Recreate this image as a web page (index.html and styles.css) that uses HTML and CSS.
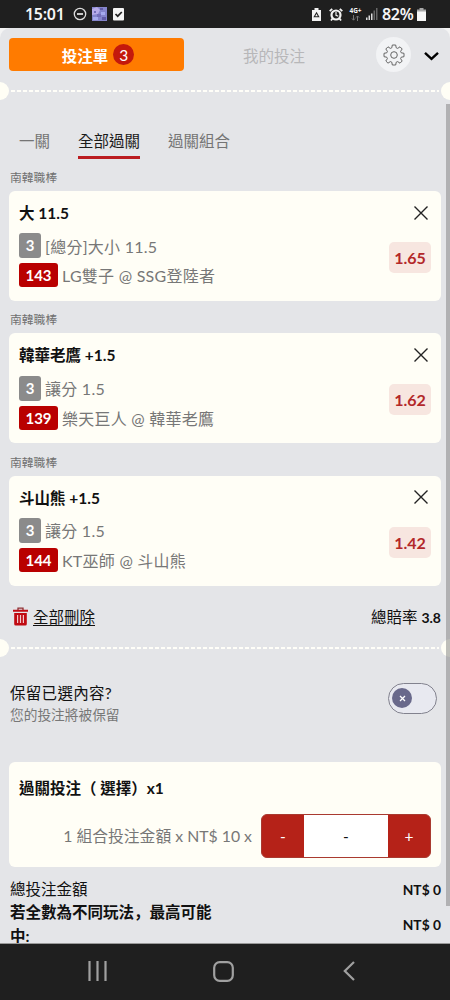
FILE: index.html
```html
<!DOCTYPE html>
<html lang="zh-Hant">
<head>
<meta charset="utf-8">
<title>投注單</title>
<link rel="stylesheet" href="styles.css">
</head>
<body>
<div class="phone">
  <header class="status">
    <span class="clock">15:01</span>
    <svg class="dnd" width="14" height="14" viewBox="0 0 14 14" fill="none" stroke="#ddd" stroke-width="1.3"><circle cx="7" cy="7" r="5.7"/><path d="M4 7h6" stroke-width="1.8"/></svg>
    <svg class="thumb" width="15" height="14" viewBox="0 0 15 14"><path fill="#8585cc" d="M0 0h15v14H0z"/><path fill="#b6abe9" d="M0 2l5-2 3 3-2 4-6 1z"/><path fill="#625ca8" d="M8 1h3v2H8zM10 10h4v3h-4z"/><path fill="#746ebb" d="M5 7h4v3H5zM2 4h2v2H2z"/><path fill="#a6aaee" d="M9 5h4v3H9zM1 10h5v3H1z"/></svg>
    <svg class="check" width="11" height="13" viewBox="0 0 11 13"><rect width="11" height="12.5" rx="1" fill="#f4f4f4"/><path d="M2.5 6l2.2 2.2L8.8 4" fill="none" stroke="#222" stroke-width="1.7"/></svg>
    <span class="grow"></span>
    <svg class="saver" width="9" height="13" viewBox="0 0 9 13"><path fill="#f2f2f2" d="M0 2h2.5V0h4v2H9v11H0z"/><path d="M4.5 4.8l2.2 4H2.3z" fill="none" stroke="#222" stroke-width="1.1"/></svg>
    <svg class="alarm" width="14" height="13" viewBox="0 0 14 13" fill="none" stroke="#f2f2f2"><circle cx="7" cy="7" r="4.5" stroke-width="2.2"/><path d="M.7 3.2L3.2.9M13.3 3.2L10.8.9M3.5 10.5l-1.5 2M10.5 10.5l1.5 2" stroke-width="1.8"/><path d="M7 4v3.3l2.3 1" stroke-width="1.2"/></svg>
    <span class="net"><b>4G+</b><svg width="9" height="6" viewBox="0 0 9 6" fill="none" stroke="#777"><path d="M2.5 0v5M1 3.5l1.5 1.7L4 3.5M6.5 6V1M5 2.5L6.5 1 8 2.5"/></svg></span>
    <svg class="signal" width="12" height="12" viewBox="0 0 12 12"><path fill="#ddd" d="M0 9.5h1.5V12H0zM2.5 7.5H4V12H2.5zM5 5.5h1.5V12H5z"/><path fill="#666" d="M7.5 2.5H9V12H7.5zM10 0h1.5v12H10z"/></svg>
    <span class="percent">82%</span>
    <svg class="battery" width="9" height="13" viewBox="0 0 9 13"><path fill="#a8a8a8" d="M2.5 0h4v1.5H9V4H0V1.5h2.5z"/><path fill="#f7f7f7" d="M0 3.5h9V13H0z"/></svg>
  </header>

  <main class="sheet-wrap">
    <div class="sheet">
      <nav class="top">
        <button class="slip">投注單<span class="count">3</span></button>
        <span class="mine">我的投注</span>
        <span class="gear"><svg width="22" height="22" viewBox="0 0 22 22" fill="none" stroke="#666" stroke-width="1"><path d="M9.3 1h3.4l.5 2.8 1.5.6 2.3-1.6 2.2 2.2-1.6 2.3.6 1.5 2.8.5v3.4l-2.8.5-.6 1.5 1.6 2.3-2.2 2.2-2.3-1.600-1.500.6-.5 2.800H9.300l-.5-2.800-1.500-.6L5 19.200 2.800 17l1.600-2.300-.6-1.500L1 12.700V9.300l2.800-.5.6-1.500L2.800 5 5 2.800l2.300 1.600 1.500-.6z" stroke-linejoin="round"/><circle cx="11" cy="11" r="3.3"/></svg></span>
        <svg class="chev" width="15" height="10" viewBox="0 0 15 10" fill="none" stroke="#000" stroke-width="2.4"><path d="M1 1.8l6.5 6 6.5-6"/></svg>
      </nav>
      <div class="perforation"></div>

      <nav class="tabs">
        <span class="tab">一關</span>
        <span class="tab active">全部過關</span>
        <span class="tab">過關組合</span>
      </nav>

      <section class="bet">
        <h3 class="league">南韓職棒</h3>
        <div class="card">
          <div class="info">
            <div class="pick">大 11.5</div>
            <div class="line"><span class="tag gray">3</span><span class="txt">[總分]大小 11.5</span></div>
            <div class="line"><span class="tag red">143</span><span class="txt">LG雙子 @ SSG登陸者</span></div>
          </div>
          <div class="side">
            <svg class="close" width="16" height="16" viewBox="0 0 16 16"><path d="M1.5 1.5l13 13M14.5 1.5l-13 13" stroke="#222" stroke-width="1.4"/></svg>
            <span class="odds">1.65</span>
          </div>
        </div>
      </section>
      <section class="bet">
        <h3 class="league">南韓職棒</h3>
        <div class="card">
          <div class="info">
            <div class="pick">韓華老鷹 +1.5</div>
            <div class="line"><span class="tag gray">3</span><span class="txt">讓分 1.5</span></div>
            <div class="line"><span class="tag red">139</span><span class="txt">樂天巨人 @ 韓華老鷹</span></div>
          </div>
          <div class="side">
            <svg class="close" width="16" height="16" viewBox="0 0 16 16"><path d="M1.5 1.5l13 13M14.5 1.5l-13 13" stroke="#222" stroke-width="1.4"/></svg>
            <span class="odds">1.62</span>
          </div>
        </div>
      </section>
      <section class="bet">
        <h3 class="league">南韓職棒</h3>
        <div class="card">
          <div class="info">
            <div class="pick">斗山熊 +1.5</div>
            <div class="line"><span class="tag gray">3</span><span class="txt">讓分 1.5</span></div>
            <div class="line"><span class="tag red">144</span><span class="txt">KT巫師 @ 斗山熊</span></div>
          </div>
          <div class="side">
            <svg class="close" width="16" height="16" viewBox="0 0 16 16"><path d="M1.5 1.5l13 13M14.5 1.5l-13 13" stroke="#222" stroke-width="1.4"/></svg>
            <span class="odds">1.42</span>
          </div>
        </div>
      </section>

      <div class="summary">
        <svg class="trash" width="15" height="19" viewBox="0 0 15 19"><path d="M5 3V1.2h5V3" fill="none" stroke="#8f3033" stroke-width="1.3"/><path fill="#c00a12" d="M0 2.800h15v2H0zM1.200 6h12.600v11a1.500 1.500 0 0 1-1.500 1.500H2.700A1.500 1.500 0 0 1 1.200 17z"/><path d="M4.600 8v8M7.500 8v8M10.400 8v8" stroke="#f1c9cb" stroke-width="1.2"/></svg>
        <a class="remove">全部刪除</a>
        <span class="total-odds">總賠率 <b>3.8</b></span>
      </div>
      <div class="perforation"></div>

      <div class="keep">
        <div>
          <div class="keep-title">保留已選內容?</div>
          <div class="keep-note">您的投注將被保留</div>
        </div>
        <span class="toggle"><span class="knob"><svg width="7" height="7" viewBox="0 0 7 7"><path d="M1 1l5 5M6 1L1 6" stroke="#fff" stroke-width="1.3"/></svg></span></span>
      </div>

      <section class="stake">
        <div class="stake-title">過關投注（ 選擇）x1</div>
        <div class="stake-row">
          <span class="stake-label">1 組合投注金額 x NT$ 10 x</span>
          <div class="stepper"><span class="step">-</span><span class="value">-</span><span class="step">+</span></div>
        </div>
      </section>

      <div class="totals">
        <div class="total"><span class="total-label">總投注金額</span><b class="amount">NT$ 0</b></div>
        <div class="total"><b class="payout" lang="zh-Hans">若全數為不同玩法，最高可能中:</b><b class="amount">NT$ 0</b></div>
      </div>
    </div>
    <div class="scrollbar"></div>
  </main>

  <footer class="navbar">
    <svg width="20" height="20" viewBox="0 0 20 20" stroke="#a0a0a0" stroke-width="2.2"><path d="M2.5 0v20M10.5 0v20M18.500 0v20"/></svg>
    <svg class="home" width="21" height="21" viewBox="0 0 21 21" fill="none" stroke="#a0a0a0" stroke-width="2.2"><rect x="1.2" y="1.2" width="18.6" height="18.6" rx="5.5"/></svg>
    <svg width="12" height="20" viewBox="0 0 12 20" fill="none" stroke="#a0a0a0" stroke-width="2.2"><path d="M11 1L1.800 10 11 19"/></svg>
  </footer>
</div>
</body>
</html>
```
FILE: styles.css
```css
* { box-sizing: border-box; }
body {
  margin: 0;
  font-family: Lato, "Noto Sans CJK TC", sans-serif;
  font-size: 15.5px;
  color: #111;
}
.phone { width: 450px; height: 1000px; display: flex; flex-direction: column; overflow: hidden; background: #1f1f1f; }

.status { height: 28px; flex: none; display: flex; align-items: center; padding: 0 24px 0 25px; background: #1f1f1f; color: #f5f5f5; font: 600 16px "Noto Sans", sans-serif; }
.grow { flex: 1; }
.clock { width: 48px; letter-spacing: -0.3px; }
.thumb { margin-left: 5px; }
.check { margin-left: 6px; }
.alarm { margin-left: 8px; }
.net { width: 13px; margin-left: 6px; display: flex; flex-direction: column; align-items: center; }
.net b { font: 700 6.5px/8px "Noto Sans", sans-serif; }
.signal { margin-left: 4px; }
.percent { margin-left: 4px; width: 35px; letter-spacing: -0.3px; }

.sheet-wrap { position: relative; height: 916px; flex: none; background: #f4f4f4; overflow: hidden; border-bottom: 1px solid #999; }
.sheet { height: 916px; background: #e4e5e8; border-radius: 10px 10px 0 0; }
.scrollbar { position: absolute; right: 0; top: 76px; width: 4px; height: 802px; background: rgba(125, 125, 125, 0.5); }

.top { height: 59.5px; padding: 10px 11px 0 9px; display: flex; align-items: flex-start; }
.slip { width: 175px; height: 33px; border: 0; border-radius: 4px; padding: 0 0 0 3px; background: #ff7b00; color: #fff; font: 700 15.5px Lato, "Noto Sans CJK TC", sans-serif; display: flex; align-items: center; justify-content: center; gap: 5px; }
.count { width: 21px; height: 21px; border-radius: 50%; background: #c4190c; font-weight: 400; display: flex; align-items: center; justify-content: center; }
.mine { width: 180px; height: 33px; line-height: 36px; text-align: center; color: #b7b7b9; }
.gear { width: 35px; height: 35px; margin: -1px 0 0 12px; border-radius: 50%; background: #f2f3f5; display: flex; align-items: center; justify-content: center; }
.chev { margin: 13px 0 0 13px; }

.perforation { height: 18px; display: flex; align-items: center; justify-content: space-between; margin: -6px -9px 0 -9px; background: repeating-linear-gradient(90deg, #fffef8 0 4px, transparent 4px 6px) 20px 8px / calc(100% - 40px) 2px no-repeat; }
.perforation::before, .perforation::after { content: ""; width: 18px; height: 18px; border-radius: 50%; background: #fffef5; }

.tabs { height: 61.5px; padding: 28.5px 0 0 19px; display: flex; align-items: flex-start; gap: 28px; color: #757575; }
.tab { height: 31px; line-height: 26px; }
.tab.active { color: #1a1a1a; border-bottom: 3px solid #bb1c20; }

.bet { height: 142.3px; padding: 0 9px; }
.league { height: 30px; margin: 0; padding-left: 1px; font-size: 11.8px; font-weight: 400; line-height: 33px; color: #707070; }
.card { height: 110px; border-radius: 6px; background: #fffef6; display: flex; justify-content: space-between; padding: 10px 10px 0 10px; }
.pick { height: 30px; line-height: 25px; font-weight: 700; color: #111; }
.line { height: 29.5px; display: flex; align-items: center; gap: 4px; color: #777; }
.tag { height: 25px; border-radius: 3px; color: #fff; font-size: 15px; font-weight: 700; line-height: 25px; text-align: center; }
.tag.gray { width: 22px; background: #8b8b8b; }
.tag.red { width: 39px; height: 24px; line-height: 24px; background: #b90000; }
.txt { font-size: 16px; letter-spacing: 0.25px; white-space: pre; }
.side { display: flex; flex-direction: column; align-items: flex-end; }
.close { margin: 3.5px 2px 0 0; }
.odds { width: 42px; height: 31px; margin-top: 21.5px; border-radius: 5px; background: #f7e6e0; color: #b3282a; font-size: 16px; font-weight: 700; line-height: 31px; text-align: center; }

.summary { height: 57.5px; padding: 17px 9px 0 13px; display: flex; align-items: flex-start; line-height: 25px; }
.trash { margin-top: 2px; }
.remove { margin-left: 5px; text-decoration: underline; text-underline-offset: 2px; }
.total-odds { margin-left: auto; }
.total-odds b { font-size: 14px; }

.keep { height: 104.5px; padding: 24px 13px 0 10px; display: flex; justify-content: space-between; }
.keep-title { line-height: 24px; letter-spacing: 0.3px; }
.keep-note { font-size: 13.7px; line-height: 20px; color: #777; }
.toggle { width: 49px; height: 31px; margin-top: 2px; border: 1px solid #82828e; border-radius: 16px; background: #e8e9f0; padding: 4px 3px; }
.knob { width: 20px; height: 20px; border-radius: 50%; background: #69698b; display: flex; align-items: center; justify-content: center; }

.stake { height: 105px; margin: 0 9px; padding: 14px 10px 0; border-radius: 6px; background: #fffef6; }
.stake-title { height: 38px; line-height: 25px; font-weight: 700; white-space: pre; }
.stake-row { display: flex; align-items: center; justify-content: flex-end; gap: 9px; }
.stake-label { color: #777; font-size: 15.8px; white-space: pre; }
.stepper { width: 170px; height: 44px; display: flex; border: 1px solid #a93a30; border-radius: 6px; overflow: hidden; background: #b52218; line-height: 42px; text-align: center; }
.step { width: 42px; color: #fff; }
.value { flex: 1; background: #fff; }

.totals { padding: 11px 9px 0 10px; }
.total { display: flex; align-items: center; justify-content: space-between; line-height: 23.5px; }
.payout { width: 210px; font-family: Lato, "Noto Sans CJK SC", sans-serif; }
.amount { font-size: 13.8px; }

.navbar { flex: 1; display: flex; align-items: center; justify-content: space-between; padding: 0 95px 2px 87px; background: #1f1f1f; }
.home { margin-right: 3px; }
```
